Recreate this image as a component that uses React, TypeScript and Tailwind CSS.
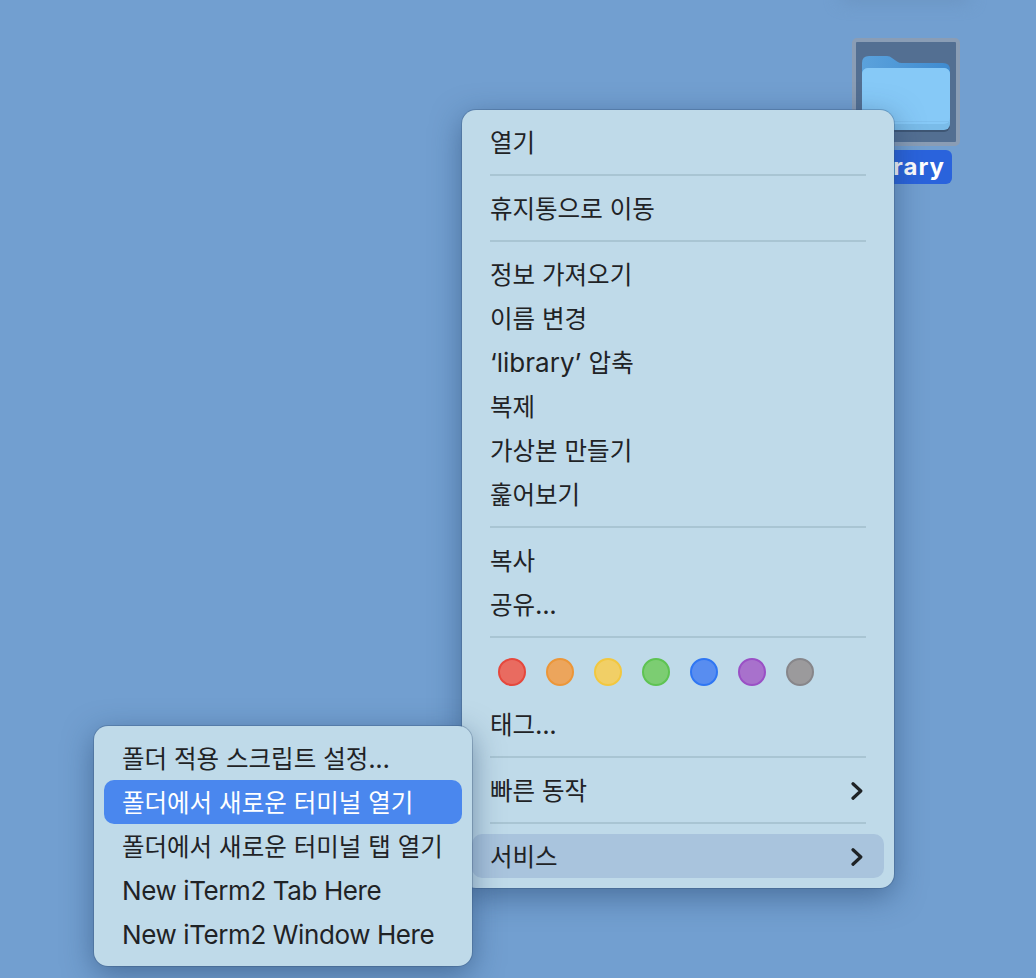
const font = "font-['Inter','Noto_Sans_CJK_KR',sans-serif]";

const tagColors = [
  "bg-[#e96b60] border-[#e5483d]",
  "bg-[#eca55c] border-[#ec9638]",
  "bg-[#f1cf66] border-[#f2c73f]",
  "bg-[#7ccd72] border-[#5ec352]",
  "bg-[#588df0] border-[#2f76f3]",
  "bg-[#a871cc] border-[#9a50c5]",
  "bg-[#9b9a9c] border-[#87868a]",
];

// hangul runs need a smaller size than latin to get the reference widths
function Label({ text }: { text: string }) {
  const parts = text.split(/([\uAC00-\uD7A3]+)/).filter(Boolean);
  return (
    <span className="whitespace-pre">
      {parts.map((p, i) =>
        /[\uAC00-\uD7A3]/.test(p) ? (
          <span key={i} className="text-[24.5px]">{p}</span>
        ) : (
          <span key={i} className={p.includes("library") ? "" : "tracking-[-0.4px]"}>{p}</span>
        )
      )}
    </span>
  );
}

function Chevron() {
  return (
    <svg width="12" height="18" viewBox="0 0 12 18" fill="none" className="text-[#1f2326]">
      <path d="M2 1.800 L9.800 9 L2 16.200" stroke="currentColor" strokeWidth="3.200" strokeLinecap="round" strokeLinejoin="round" />
    </svg>
  );
}

function Item({ label, arrow, tone }: { label: string; arrow?: boolean; tone?: "hover" | "active" }) {
  const bg = tone === "hover" ? "bg-[#a9c4dd] text-[#1f2326]" : tone === "active" ? "bg-[#4a87ee] text-white" : "text-[#1f2326]";
  return (
    <div className={`h-11 mx-[10px] pl-[18px] pr-[21px] pt-[2px] rounded-[10px] flex items-center justify-between ${bg}`}>
      <Label text={label} />
      {arrow && <Chevron />}
    </div>
  );
}

function Sep() {
  return (
    <div className="h-[22px] flex items-center px-7">
      <div className="h-[2px] w-full bg-[#a9c5d3]" />
    </div>
  );
}

function FolderIcon() {
  return (
    <svg width="88" height="76" viewBox="0 0 88 76">
      <defs>
        <linearGradient id="tab" x1="0" y1="0" x2="1" y2="0">
          <stop offset="0" stopColor="#5ba2dc" />
          <stop offset="1" stopColor="#3f8bd0" />
        </linearGradient>
      </defs>
      <path d="M0 7 Q0 0 7 0 H25 Q28 0 30 2 L35 5.500 Q37 7 40 7 H81 Q88 7 88 14 V30 H0 Z" fill="url(#tab)" />
      <rect x="0" y="14" width="88" height="62" rx="6" fill="#3e5674" />
      <rect x="0" y="12" width="88" height="62" rx="6" fill="#7abce9" />
      <rect x="0" y="12" width="88" height="56" rx="6" fill="#86c9f7" />
      <rect x="0" y="65" width="88" height="1" fill="#7fc0ee" />
    </svg>
  );
}

const panel = "absolute py-[10px] rounded-[14px] bg-[#bfdae9] shadow-[0_0_0_1px_rgba(50,80,115,0.3),0_8px_30px_rgba(30,60,100,0.5)]";

export default function App() {
  return (
    <div className={`relative w-[1036px] h-[978px] overflow-hidden bg-[#729fd0] text-[26px] leading-none ${font}`}>
      {/* smudge at top edge */}
      <div className="absolute left-[840px] -top-[10px] w-[130px] h-3 rounded-full bg-[#6a93c0] blur-sm" />

      {/* desktop folder */}
      <div className="absolute left-[852px] top-[38px] w-[108px] h-[108px] rounded-[5px] border-4 border-[#8a9db5] bg-[#536f92] flex items-start justify-center pt-[14px]">
        <FolderIcon />
      </div>
      <div className="absolute left-[860px] top-[150px] w-[92px] h-[34px] rounded-[6px] bg-[#2a63dc] text-white font-bold text-[24px] tracking-[1px] flex items-center justify-end pr-[7px]">
        library
      </div>

      {/* context menu */}
      <div className={`${panel} left-[462px] top-[110px] w-[432px]`}>
        <Item label="열기" />
        <Sep />
        <Item label="휴지통으로 이동" />
        <Sep />
        <Item label="정보 가져오기" />
        <Item label="이름 변경" />
        <Item label="‘library’ 압축" />
        <Item label="복제" />
        <Item label="가상본 만들기" />
        <Item label="훑어보기" />
        <Sep />
        <Item label="복사" />
        <Item label="공유..." />
        <Sep />
        <div className="h-[54px] pl-[36px] pt-[10px] flex gap-5">
          {tagColors.map((c) => (
            <div key={c} className={`w-7 h-7 rounded-full border-2 ${c}`} />
          ))}
        </div>
        <Item label="태그..." />
        <Sep />
        <Item label="빠른 동작" arrow />
        <Sep />
        <Item label="서비스" arrow tone="hover" />
      </div>

      {/* services submenu */}
      <div className={`${panel} left-[94px] top-[726px] w-[378px]`}>
        <Item label="폴더 적용 스크립트 설정..." />
        <Item label="폴더에서 새로운 터미널 열기" tone="active" />
        <Item label="폴더에서 새로운 터미널 탭 열기" />
        <Item label="New iTerm2 Tab Here" />
        <Item label="New iTerm2 Window Here" />
      </div>
    </div>
  );
}
